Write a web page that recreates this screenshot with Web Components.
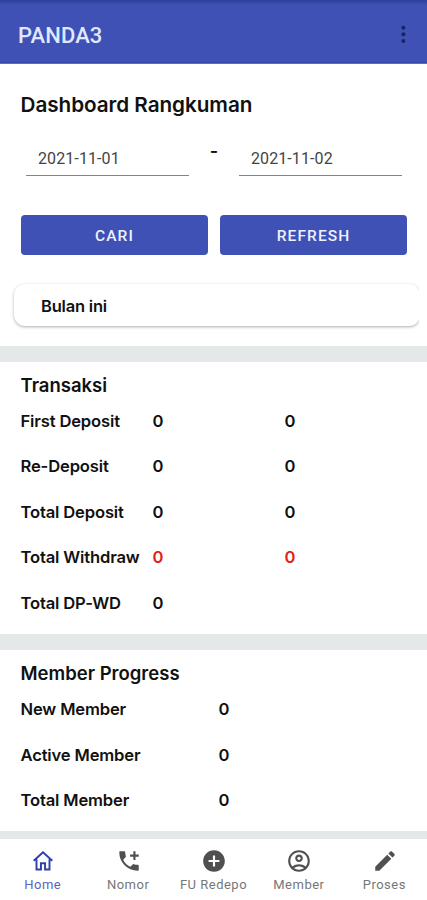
<!DOCTYPE html>
<html lang="id">
<head>
<meta charset="utf-8">
<title>PANDA3</title>
<style>
html, body { margin: 0; height: 900px; overflow: hidden; background: #fff; }
</style>
</head>
<body>
<panda-app></panda-app>
<script>
const define = (name, html) => customElements.define(name, class extends HTMLElement {
  connectedCallback() {
    if (this.shadowRoot) return;
    const t = document.createElement('template');
    t.innerHTML = html;
    this.attachShadow({ mode: 'open' }).append(t.content.cloneNode(true));
  }
});

define('app-header', `<style>
:host { display: flex; box-sizing: border-box; height: 64px; flex: none; padding: 7px 17px 0 18px; align-items: center; justify-content: space-between;
 background: linear-gradient(#2f3f9d 0, #3748a8 3px, #3f51b5 5px, #3f51b5 62px, #2c3da6 63px, #8f9ad6 64px);
 color: #dfe8ff; font: 500 22px/26px Roboto, sans-serif; letter-spacing: .1px; }
svg { display: block; width: 14px; height: 24px; }
</style><slot></slot><svg viewBox="0 0 14 24" fill="#17245f"><circle cx="7.4" cy="3.7" r="2"/><circle cx="7.4" cy="10.3" r="2"/><circle cx="7.4" cy="16.9" r="2"/></svg>`);

define('date-field', `<style>
:host { display: block; box-sizing: border-box; width: 163px; height: 36px; padding: 9px 12px 0; border-bottom: 1px solid #858585; color: #444; font: 400 16px/20px Roboto, sans-serif; letter-spacing: .1px; }
</style><slot></slot>`);

define('action-button', `<style>
:host { display: flex; flex: 1; align-items: center; justify-content: center; height: 40px; padding-top: 2px; box-sizing: border-box; border-radius: 4px; background: #3f51b5; color: #edf1ff; font: 500 15.5px/20px Roboto, sans-serif; letter-spacing: 1.1px; }
</style><slot></slot>`);

define('period-card', `<style>
:host { display: block; overflow: hidden; margin: 24px 8px 0 8px; padding: 5px 0 10px 6px; }
div { box-sizing: border-box; width: 406px; height: 42px; padding: 12px 27px; border-radius: 11px; background: #fff; box-shadow: 0 1px 3px rgba(0,0,0,.32); font: 600 16.5px/20px Inter, sans-serif; letter-spacing: -.2px; }
</style><div><slot></slot></div>`);

customElements.define('stat-row', class extends HTMLElement {
  connectedCallback() {
    if (this.shadowRoot) return;
    const cells = this.getAttribute('values').split(',').map(v => `<span class="value">${v}</span>`).join('');
    this.attachShadow({ mode: 'open' }).innerHTML = `<style>
:host { display: grid; grid-template-columns: var(--stat-columns); height: 20px; font: 600 16.6px/20px Inter, sans-serif; white-space: nowrap; }
.label { letter-spacing: -.16px; }
:host([negative]) .value { color: #e32018; }
</style><span class="label"><slot></slot></span>${cells}`;
  }
});

customElements.define('titled-section', class extends HTMLElement {
  connectedCallback() {
    if (this.shadowRoot) return;
    this.attachShadow({ mode: 'open' }).innerHTML = `<style>
:host { display: block; box-sizing: border-box; border-top: 16px solid #e4e8e8; padding: 11px 20px 0 20.5px; }
h2 { margin: 0 0 14px; font: 600 18.5px/24px Inter, sans-serif; }
.rows { display: grid; gap: 25.6px; }
</style><h2>${this.getAttribute('heading')}</h2><div class="rows"><slot></slot></div>`;
  }
});

const icons = {
  home: '<path d="M6 10.4v9.4h4.1v-5.7h3.8v5.7H18v-9.4M3.4 11.8 12 4l8.6 7.8" fill="none" stroke="currentColor" stroke-width="1.8"/>',
  call: '<path d="M20 15.5c-1.25 0-2.45-.2-3.57-.57-.35-.11-.74-.03-1.02.24l-2.2 2.2c-2.83-1.44-5.15-3.75-6.59-6.59l2.2-2.21c.28-.26.36-.65.25-1C8.7 6.45 8.5 5.25 8.5 4c0-.55-.45-1-1-1H4c-.55 0-1 .45-1 1 0 9.39 7.61 17 17 17 .55 0 1-.45 1-1v-3.5c0-.55-.45-1-1-1zM21 6h-3V3h-2v3h-3v2h3v3h2V8h3V6z"/>',
  add: '<path d="M12 2C6.48 2 2 6.48 2 12s4.48 10 10 10 10-4.48 10-10S17.52 2 12 2zm5 11h-4v4h-2v-4H7v-2h4V7h2v4h4v2z"/>',
  member: '<path d="M12 2C6.48 2 2 6.48 2 12s4.48 10 10 10 10-4.48 10-10S17.52 2 12 2zM7.35 18.5C8.66 17.56 10.26 17 12 17s3.34.56 4.65 1.5C15.34 19.44 13.74 20 12 20s-3.34-.56-4.65-1.5zm10.79-1.38C16.45 15.8 14.32 15 12 15s-4.45.8-6.14 2.12C4.7 15.73 4 13.95 4 12c0-4.42 3.58-8 8-8s8 3.58 8 8c0 1.95-.7 3.73-1.86 5.12zM12 6c-1.93 0-3.5 1.57-3.5 3.5S10.07 13 12 13s3.5-1.57 3.5-3.5S13.93 6 12 6zm0 5c-.83 0-1.5-.67-1.5-1.5S11.17 8 12 8s1.5.67 1.5 1.5S12.83 11 12 11z"/>',
  edit: '<path d="M3 17.25V21h3.75L17.81 9.94l-3.75-3.75L3 17.25zM20.71 7.04c.39-.39.39-1.02 0-1.41l-2.34-2.34c-.39-.39-1.02-.39-1.41 0l-1.83 1.83 3.75 3.75 1.83-1.83z"/>'
};
customElements.define('nav-item', class extends HTMLElement {
  connectedCallback() {
    if (this.shadowRoot) return;
    this.attachShadow({ mode: 'open' }).innerHTML = `<style>
:host { display: flex; flex-direction: column; align-items: center; color: #505050; font: 400 13px/16px Roboto, sans-serif; letter-spacing: .5px; white-space: nowrap; }
svg { display: block; width: 26px; height: 26px; margin: 0 0 3px 1px; }
span { color: #777; }
:host([active]) { color: #3040ae; }
:host([active]) span { color: #5966b8; }
</style><svg viewBox="0 0 24 24" fill="currentColor">${icons[this.getAttribute('icon')]}</svg><span><slot></slot></span>`;
  }
});

define('bottom-nav', `<style>
:host { display: grid; grid-template-columns: repeat(5, 1fr); box-sizing: border-box; height: 61px; flex: none; padding-top: 9px; background: #fff; }
</style><slot></slot>`);

define('panda-app', `<style>
:host { display: flex; flex-direction: column; width: 427px; height: 900px; overflow: hidden; background: #fff; color: #111; }
h1 { margin: 29px 20.5px 0; font: 600 20.7px/24px Inter, sans-serif; letter-spacing: -.05px; }
.dates { display: flex; justify-content: space-between; padding: 23px 25px 0 26px; font: 600 18px/22px Inter, sans-serif; }
.buttons { display: flex; gap: 12px; padding: 39px 20px 0 21px; }
main { flex: none; }
.filters { display: flow-root; height: 281.5px; }
.transactions { height: 288.5px; --stat-columns: 132px 132px 1fr; }
.members { height: 196.5px; --stat-columns: 198px 1fr; }
.end { height: 8px; background: #e4e8e8; }
bottom-nav { margin-top: auto; }
</style>
<app-header>PANDA3</app-header>
<main>
<div class="filters">
<h1>Dashboard Rangkuman</h1>
<div class="dates"><date-field>2021-11-01</date-field><span>-</span><date-field>2021-11-02</date-field></div>
<div class="buttons"><action-button>CARI</action-button><action-button>REFRESH</action-button></div>
<period-card>Bulan ini</period-card>
</div>
<titled-section class="transactions" heading="Transaksi">
<stat-row values="0,0">First Deposit</stat-row>
<stat-row values="0,0">Re-Deposit</stat-row>
<stat-row values="0,0">Total Deposit</stat-row>
<stat-row values="0,0" negative>Total Withdraw</stat-row>
<stat-row values="0">Total DP-WD</stat-row>
</titled-section>
<titled-section class="members" heading="Member Progress">
<stat-row values="0">New Member</stat-row>
<stat-row values="0">Active Member</stat-row>
<stat-row values="0">Total Member</stat-row>
</titled-section>
<div class="end"></div>
</main>
<bottom-nav>
<nav-item icon="home" active>Home</nav-item>
<nav-item icon="call">Nomor</nav-item>
<nav-item icon="add">FU Redepo</nav-item>
<nav-item icon="member">Member</nav-item>
<nav-item icon="edit">Proses</nav-item>
</bottom-nav>`);
</script>
</body>
</html>
